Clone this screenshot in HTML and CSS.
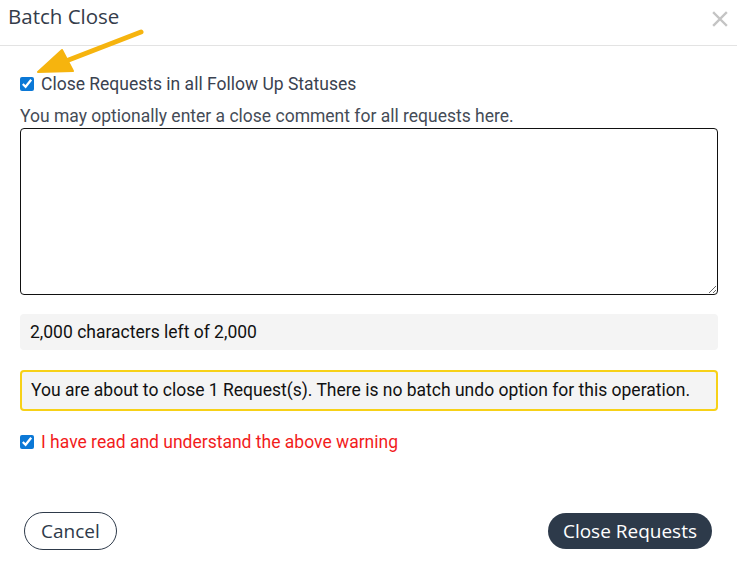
FILE: index.html
```html
<!DOCTYPE html>
<html lang="en">
<head>
  <meta charset="UTF-8" />
  <title>Batch Close</title>
  <link rel="stylesheet" href="styles.css">
</head>
<body>

<div class="modal">
  <header class="modal-head">
    <h1>Batch Close</h1>
    <button class="close-x" aria-label="Close">
      <svg width="16" height="16" viewBox="0 0 16 16"><path d="M2 2L14 14M14 2L2 14" stroke="#c4c4c4" stroke-width="2.4" stroke-linecap="square"/></svg>
    </button>
  </header>

  <!-- annotation arrow -->
  <svg class="pointer" width="160" height="90" viewBox="0 0 160 90">
    <path d="M141 32L66 61" stroke="#f6b40e" stroke-width="5" stroke-linecap="round"/>
    <path d="M38 72L62 50L73 71Z" fill="#f6b40e" stroke="#f6b40e" stroke-width="2" stroke-linejoin="round"/>
  </svg>

  <div class="modal-body">
    <label class="check">
      <input type="checkbox" checked>
      <span>Close Requests in all Follow Up Statuses</span>
    </label>
    <p class="hint">You may optionally enter a close comment for all requests here.</p>
    <textarea class="comment"></textarea>

    <div class="counter">2,000 characters left of 2,000</div>

    <div class="warning">You are about to close 1 Request(s). There is no batch undo option for this operation.</div>

    <label class="check check-red">
      <input type="checkbox" checked>
      <span>I have read and understand the above warning</span>
    </label>
  </div>

  <footer class="modal-foot">
    <button class="btn btn-outline">Cancel</button>
    <button class="btn btn-dark">Close Requests</button>
  </footer>
</div>

</body>
</html>
```

FILE: styles.css
```css
body {
  margin: 0;
  background: #fff;
  font-family: Roboto, 'Liberation Sans', sans-serif;
  color: #3a4250;
}

.modal {
  position: relative;
  width: 737px;
  height: 569px;
}

.modal-head {
  display: flex;
  justify-content: space-between;
  align-items: flex-start;
  height: 46px;
  border-bottom: 1px solid #e3e3e3;
  box-sizing: border-box;
  padding: 2px 8px 0 8px;
}

.modal-head h1 {
  margin: 0;
  font-family: 'Open Sans', Lato, sans-serif;
  font-weight: 400;
  font-size: 20.5px;
  line-height: 28px;
  color: #343c4a;
}

.close-x {
  background: none;
  border: none;
  padding: 0;
  margin: 9px 1px 0 0;
  width: 16px;
  height: 16px;
  cursor: pointer;
}

.close-x svg { display: block; }

.pointer {
  position: absolute;
  left: 0;
  top: 0;
  pointer-events: none;
}

.modal-body {
  padding: 27px 19px 0 20px;
}

.check {
  display: flex;
  align-items: center;
  gap: 7px;
  font-size: 17.5px;
  line-height: 22px;
}

.check input {
  width: 14px;
  height: 14px;
  margin: 0;
  accent-color: #0b78d6;
}

.check-red {
  color: #f21c1c;
  margin-top: 20px;
}

.hint {
  margin: 11px 0 0;
  font-size: 17.5px;
  line-height: 20px;
  color: #454c57;
}

.comment {
  display: block;
  width: 100%;
  height: 167px;
  box-sizing: border-box;
  margin-top: 2px;
  border: 1px solid #111;
  border-radius: 4px;
  resize: vertical;
  font-family: inherit;
}

.counter {
  margin-top: 19px;
  height: 36px;
  line-height: 36px;
  padding: 0 10px;
  background: #f4f4f4;
  border-radius: 4px;
  font-size: 17.5px;
  color: #111;
}

.warning {
  margin-top: 20px;
  height: 41px;
  box-sizing: border-box;
  line-height: 37px;
  padding: 0 9px;
  background: #f4f4f4;
  border: 2px solid #f7d117;
  border-radius: 4px;
  font-size: 17.5px;
  color: #111;
}

.modal-foot {
  display: flex;
  justify-content: space-between;
  align-items: center;
  padding: 0 25px 0 24px;
  margin-top: 59px;
}

.btn {
  font-family: 'Open Sans', Lato, sans-serif;
  font-size: 19px;
  border-radius: 20px;
  cursor: pointer;
}

.btn-outline {
  height: 38px;
  padding: 0 16px;
  background: #fff;
  border: 1px solid #2e3a4a;
  color: #2e3a4a;
}

.btn-dark {
  height: 36px;
  padding: 0 15px;
  background: #2d3a4a;
  border: none;
  color: #fff;
  font-weight: 500;
}
```
